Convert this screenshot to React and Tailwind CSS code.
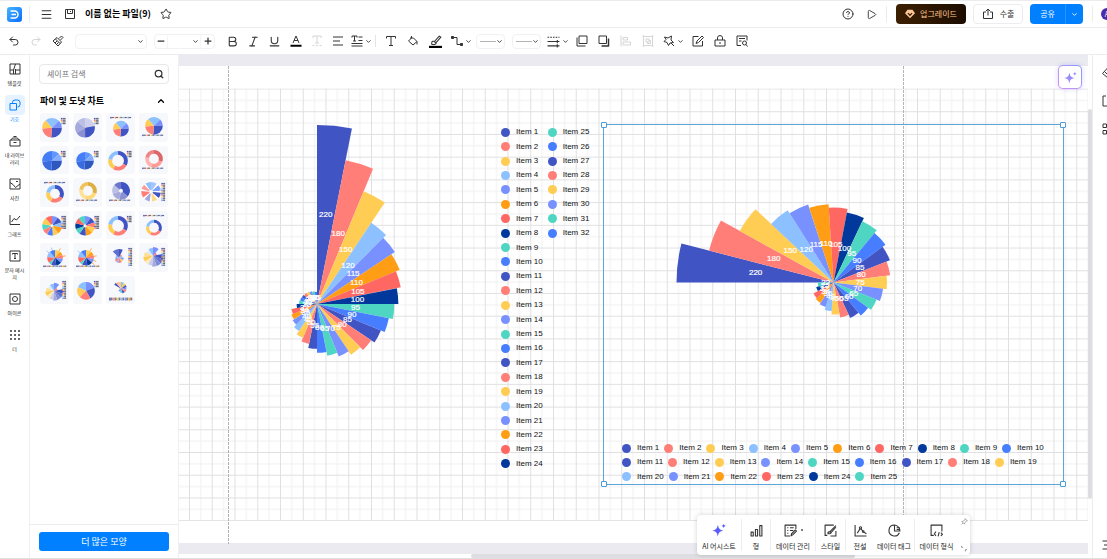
import React, { useState } from "react";
import {
  Bold, ChevronDown, ChevronUp, CircleHelp, Italic, Menu, Minus, Play, Plus,
  Redo2, Search, Star, Underline, Undo2,
} from "lucide-react";

const INDIGO = "#4054c4";
const CORAL = "#ff7f78";
const YELLOW = "#ffcd54";
const SKY = "#8cc0ff";
const PERI = "#7891ff";
const ORANGE = "#ff9d15";
const RED = "#ff6763";
const NAVY = "#00399b";
const TEAL = "#4fd6c2";
const BLUE = "#477eff";

const COLORS = [
  INDIGO, CORAL, YELLOW, SKY, PERI, ORANGE, RED, NAVY,
  TEAL, BLUE, INDIGO, CORAL, YELLOW, PERI, TEAL, BLUE,
  INDIGO, CORAL, YELLOW, SKY, PERI, ORANGE, RED, NAVY,
  TEAL, BLUE, INDIGO, CORAL, YELLOW, PERI, TEAL, BLUE,
];

const VALUES = [
  220, 180, 150, 120, 115, 110, 105, 100, 95, 90, 85, 80, 75, 70, 65, 60,
  55, 50, 45, 40, 36, 34, 32, 25, 22, 21, 20, 19, 18, 17, 16, 15,
];

function polar(cx, cy, r, deg) {
  const a = ((deg - 90) * Math.PI) / 180;
  return [cx + r * Math.cos(a), cy + r * Math.sin(a)];
}

function wedge(cx, cy, r, from, to, inner = 0) {
  const [x1, y1] = polar(cx, cy, r, from);
  const [x2, y2] = polar(cx, cy, r, to);
  const large = to - from > 180 ? 1 : 0;
  if (!inner) return `M${cx} ${cy}L${x1} ${y1}A${r} ${r} 0 ${large} 1 ${x2} ${y2}Z`;
  const [x3, y3] = polar(cx, cy, inner, to);
  const [x4, y4] = polar(cx, cy, inner, from);
  return `M${x1} ${y1}A${r} ${r} 0 ${large} 1 ${x2} ${y2}L${x3} ${y3}A${inner} ${inner} 0 ${large} 0 ${x4} ${y4}Z`;
}

function RoseChart({ cx, cy, radius, values, start = 0 }) {
  const step = 360 / values.length;
  return (
    <g>
      {values.map((v, i) => (
        <path
          key={i}
          d={wedge(cx, cy, (radius * v) / 220, start + i * step, start + (i + 1) * step)}
          fill={COLORS[i]}
        />
      ))}
      {values.map((v, i) => {
        const [x, y] = polar(cx, cy, (radius * v) / 440, start + (i + 0.5) * step);
        return (
          <text
            key={i}
            x={x}
            y={y + 2}
            textAnchor="middle"
            fill="#fff"
            stroke="#fff"
            strokeWidth="0.2"
            className="text-[8px] font-[Liberation_Sans,sans-serif]"
          >
            {v}
          </text>
        );
      })}
    </g>
  );
}

function LegendItem({ index }) {
  return (
    <div className="flex items-center gap-[6px] whitespace-nowrap">
      <span className="size-[9px] rounded-full" style={{ background: COLORS[index] }} />
      <span>Item {index + 1}</span>
    </div>
  );
}

function LegendRow({ from, to }) {
  return (
    <div className="flex gap-[5px]">
      {COLORS.slice(from, to).map((_, i) => (
        <LegendItem key={i} index={from + i} />
      ))}
    </div>
  );
}

/* ---------- icons ---------- */

function Svg({ size = 12, sw = 2, children, className = "" }) {
  return (
    <svg
      width={size}
      height={size}
      viewBox="0 0 24 24"
      fill="none"
      stroke="currentColor"
      strokeWidth={sw}
      strokeLinejoin="round"
      className={`shrink-0 ${className}`}
    >
      {children}
    </svg>
  );
}

const SaveIcon = () => <Svg><path d="M3 3h18v18H3zM7 3v8h10V3M13 6v2" /></Svg>;
const ExportIcon = () => <Svg><path d="M8 8H3v13h18V8h-5M12 15V2M8 6l4-4 4 4" /></Svg>;
const PainterIcon = () => (
  <Svg><path d="M14 7l5-5 3 3-5 5M10 5l9 9M10 5l-8 7 10 10 7-8M6 16l4-4M9 19l4-4M7 8l9 9" /></Svg>
);
const FontColorIcon = () => (
  <Svg><path d="M6 16L12 2l6 14M8 11h8" /><path d="M1 21.5h22" stroke="#000" strokeWidth="4" /></Svg>
);
const ClearTextIcon = () => <Svg><path d="M4 6V2h16v4M12 2v14M8 16h8M3 21h4M10 21h4M17 21h4" /></Svg>;
const AlignIcon = () => <Svg><path d="M2 4h20M2 12h14M2 20h20" /></Svg>;
const SpacingIcon = () => (
  <Svg><path d="M2 5V2h10v3M7 2v10M4 12h6M15 4h8M15 11h8M1 17h22M1 22h22" /></Svg>
);
const TextIcon = () => <Svg><path d="M3 7V3h18v4M12 3v18M8 21h8" /></Svg>;
const BucketIcon = () => <Svg><path d="M6 6h7l7 7-8 7-9-8 6-6M9 6V2M20 13v6" /></Svg>;
const LineColorIcon = () => (
  <Svg size={13}><path d="M5 15c0-4 3-4 5-3l9-10 3 2-9 10c1 3-3 4-8 3zM10 12l3 3" /><path d="M0 22h24" stroke="#000" strokeWidth="4" /></Svg>
);
const ConnectorIcon = () => (
  <Svg><path d="M3 5h9v14h9" /><path d="M1 3h4v4H1zM19 17h4v4h-4z" fill="currentColor" /></Svg>
);
const LineStyleIcon = () => (
  <Svg size={13}><path d="M1 4h22" strokeDasharray="3 2" /><path d="M1 12h22M1 20h22M19 9v6M19 17v6" /></Svg>
);
const FrontIcon = () => <Svg><path d="M6 2h16v15H6zM2 5v17h17" /></Svg>;
const BackIcon = () => <Svg><path d="M2 2h15v15H2z" /><path d="M21 7v15H7" strokeWidth="3" /></Svg>;
const AlignLeftIcon = () => <Svg><path d="M2 1v22M6 5h9v5H6zM6 14h15v6H6z" /></Svg>;
const GroupIcon = () => (
  <Svg><path d="M1 2h4M19 2h4M1 22h4M19 22h4M3 1v22M21 1v22M5 3h14M5 21h14M8 8h6v6H8zM14 11h3v6h-6v-3" /></Svg>
);
const MagicIcon = () => (
  <Svg><path d="M3 4l7 2 7-4-1 8 5 5-7 1-3 5-3-6-6-2 4-4zM16 16l6 6" /></Svg>
);
const EditIcon = () => <Svg><path d="M13 3H2v19h19V12M8 17l2-5L20 2l3 3-10 10z" /></Svg>;
const LockIcon = () => <Svg><path d="M2 10h20v12H2zM7 10V6a5 5 0 0110 0v4M12 14v4" /></Svg>;
const FindDocIcon = () => (
  <Svg><path d="M10 21H2V2h20v9M6 7h12M6 12h5" /><circle cx="17" cy="16" r="4" /><path d="M20 19l3 4" /></Svg>
);

const TemplateIcon = () => <Svg><path d="M2 2h20v20H2zM9 22V14l4-12M2 14h7M13 14h9M13 22V12" /></Svg>;
const ShapesIcon = () => <Svg><path d="M7 8V7a5 5 0 015-5h5a5 5 0 015 5v4a5 5 0 01-5 5M2 9h13v13H2z" /></Svg>;
const LibraryIcon = () => <Svg><path d="M2 10h20v12H2zM4 10l3-4h10l3 4M9 3h6M9 15h6" /></Svg>;
const PhotoIcon = () => <Svg><path d="M2 2h20v20H2zM2 9l6 4 5 6M13 19l9-7M14 7h4" /></Svg>;
const GraphIcon = () => <Svg><path d="M2 2v19h20M5 16l5-7 5 3 7-8" /></Svg>;
const TextBoxIcon = () => <Svg><path d="M2 2h20v20H2zM7 9V7h10v2M12 7v10M10 17h4" /></Svg>;
const IconBoxIcon = () => <Svg><path d="M2 2h20v20H2z" /><circle cx="12" cy="12" r="5" /></Svg>;
const DotsIcon = () => (
  <Svg>
    <g fill="currentColor" stroke="none">
      {[4, 12, 20].map((x) => [4, 12, 20].map((y) => <circle key={`${x}${y}`} cx={x} cy={y} r="2" />))}
    </g>
  </Svg>
);

function Sparkle({ size = 14, from = "#7a4dff", to = "#3b6cff", id }) {
  return (
    <svg width={size} height={size} viewBox="0 0 24 24">
      <defs>
        <linearGradient id={id} x1="0" y1="1" x2="1" y2="0">
          <stop offset="0" stopColor={from} />
          <stop offset="1" stopColor={to} />
        </linearGradient>
      </defs>
      <g fill={`url(#${id})`}>
        <path d="M10 3c1.500 7 3 8.500 10 10-7 1.500-8.500 3-10 10-1.500-7-3-8.500-10-10 7-1.500 8.500-3 10-10z" />
        <path d="M20 1c.4 2.600 1 3.400 4 4-3 .6-3.600 1.400-4 4-.4-2.600-1-3.400-4-4 3-.6 3.600-1.400 4-4z" />
      </g>
    </svg>
  );
}

const BarsIcon = () => <Svg size={13}><path d="M2 15h4v7H2zM10 10h4v12h-4zM18 3h4v19h-4z" /></Svg>;
const DataIcon = () => <Svg size={13}><path d="M22 9V2H2v20h9M6 7h2M11 7h7M6 12h2M11 12h6M6 17h2M13 22l1-4 7-7 2 2-7 7z" /></Svg>;
const StyleIcon = () => <Svg size={13}><path d="M6 21H2V2h16M12 22h10v-9M7 18c0-4 2-4 4-4L22 3M11 14l2 2 9-10M7 18c3 0 6 0 6-2" /></Svg>;
const LegendIcon = () => (
  <Svg size={13}><path d="M2 2v20h21M6 17l5-8M13 9l3 4M18 15l5 3" /><circle cx="12" cy="7" r="2" /><circle cx="17" cy="14" r="1.500" /></Svg>
);
const TagPieIcon = () => <Svg size={13}><path d="M21 16A10 10 0 1112 2M12 2v11h10A11 11 0 0012 2M16 7h6M16 10h6" /></Svg>;
const FormatIcon = () => <Svg size={13}><path d="M7 21H2V2h20v12M11 14l-3 4 3 4M20 16l3 3-3 3M17 15l-2 8" /></Svg>;

function LogoIcon() {
  return (
    <svg width="15" height="15" viewBox="0 0 30 30">
      <defs>
        <linearGradient id="logo" x1="0" y1="0" x2="1" y2="1">
          <stop offset="0" stopColor="#45b5ff" />
          <stop offset="1" stopColor="#0a6cff" />
        </linearGradient>
      </defs>
      <rect width="30" height="30" rx="6" fill="url(#logo)" />
      <path d="M7 8h8a7 7 0 010 14H7M9 15h9" fill="none" stroke="#fff" strokeWidth="3" />
    </svg>
  );
}

function GemIcon() {
  return (
    <svg width="10" height="10" viewBox="0 0 24 24">
      <path d="M6 2h12l6 8-12 12L0 10z" fill="#ffc796" />
      <path d="M7 10l5 5 5-5" fill="none" stroke="#3a1c00" strokeWidth="3" />
    </svg>
  );
}

/* ---------- header and toolbar ---------- */

function Header() {
  return (
    <header className="flex h-[28px] shrink-0 items-center overflow-hidden border-y border-[#ececee] pl-[7px]">
      <LogoIcon />
      <span className="ml-[7px] h-4 w-px bg-[#ececee]" />
      <button aria-label="메뉴" className="ml-[10px]"><Menu size={13} strokeWidth={2} /></button>
      <button aria-label="저장" className="ml-[11px]"><SaveIcon /></button>
      <h1 className="ml-[9px] text-[9px] leading-[14px] font-bold text-black">이름 없는 파일(9)</h1>
      <button aria-label="즐겨찾기" className="ml-[9px]"><Star size={12} strokeWidth={2} /></button>
      <div className="ml-auto flex shrink-0 items-center">
        <button aria-label="도움말"><CircleHelp size={12} strokeWidth={2} /></button>
        <button aria-label="재생" className="ml-3"><Play size={11} strokeWidth={2} /></button>
        <span className="ml-[9px] h-4 w-px bg-[#ececee]" />
        <button className="ml-[9px] flex h-5 w-[70px] items-center justify-center gap-[5px] rounded bg-gradient-to-r from-[#3d1f00] to-[#1c0c00] text-[8px] text-[#ffc796]">
          <GemIcon />업그레이드
        </button>
        <button className="ml-[7px] flex h-5 w-[50px] items-center justify-center gap-[6px] rounded border border-[#ececee] text-[8px]">
          <ExportIcon />수출
        </button>
        <div className="ml-[7px] flex h-5 w-[53px] overflow-hidden rounded bg-[#0080ff] text-white">
          <button className="flex-1 text-[8px]">공유</button>
          <button aria-label="공유 옵션" className="flex w-[18px] items-center justify-center border-l border-[#2a93ff]">
            <ChevronDown size={7} strokeWidth={3} />
          </button>
        </div>
        <span className="ml-[9px] h-4 w-px bg-[#ececee]" />
        <span className="-mr-[6px] ml-2 flex size-[12px] items-center justify-center rounded-full bg-[#4c2ab0] text-[7px] text-white">A</span>
      </div>
    </header>
  );
}

function Tool({ label, w = "w-[22px]", menu, off, children }) {
  return (
    <button aria-label={label} disabled={off} className={`flex h-5 shrink-0 items-center justify-center ${w} ${off ? "text-[#d4d4d6]" : ""}`}>
      {children}
      {menu && <ChevronDown size={7} strokeWidth={3} className="ml-[2px] shrink-0" />}
    </button>
  );
}

function ToolSelect({ label, className, children }) {
  return (
    <div className={`relative flex h-[15px] shrink-0 items-center ${className}`}>
      {children}
      <select aria-label={label} className="absolute inset-0 w-full appearance-none bg-transparent" />
      <ChevronDown size={7} strokeWidth={3} className="pointer-events-none ml-auto" />
    </div>
  );
}

function Toolbar() {
  return (
    <div className="flex h-[27px] shrink-0 items-center border-b border-[#ececee] pl-[3px]">
      <Tool label="실행 취소"><Undo2 size={12} /></Tool>
      <Tool label="다시 실행" off><Redo2 size={12} /></Tool>
      <Tool label="서식 복사"><PainterIcon /></Tool>
      <ToolSelect label="글꼴" className="ml-[6px] w-[72px] rounded-sm border border-[#f1f1f3] pr-[2px]" />
      <div className="ml-[7px] flex h-[15px] w-[61px] shrink-0 items-center rounded-sm border border-[#f1f1f3]">
        <button aria-label="작게" className="flex w-3 justify-center"><Minus size={10} strokeWidth={3} /></button>
        <ToolSelect label="글꼴 크기" className="w-[34px] border-x border-[#f5f5f7] pr-[1px]" />
        <button aria-label="크게" className="flex flex-1 justify-center"><Plus size={10} strokeWidth={3} /></button>
      </div>
      <div className="ml-[7px] flex">
        <Tool label="굵게" w="w-[21px]"><Bold size={13} /></Tool>
        <Tool label="기울임꼴" w="w-[21px]"><Italic size={13} /></Tool>
        <Tool label="밑줄" w="w-[21px]"><Underline size={13} /></Tool>
        <Tool label="글꼴 색" w="w-[21px]"><FontColorIcon /></Tool>
        <Tool label="텍스트 효과" w="w-[21px]" off><ClearTextIcon /></Tool>
        <Tool label="정렬" w="w-[21px]"><AlignIcon /></Tool>
        <Tool label="줄 간격" w="w-[27px]" menu><SpacingIcon /></Tool>
      </div>
      <span className="h-3 w-px bg-[#e4e4e6]" />
      <div className="ml-1 flex">
        <Tool label="텍스트"><TextIcon /></Tool>
        <Tool label="채우기"><BucketIcon /></Tool>
        <Tool label="선 색"><LineColorIcon /></Tool>
        <Tool label="연결선" w="w-[30px]" menu><ConnectorIcon /></Tool>
      </div>
      <ToolSelect label="선 두께" className="w-[29px] rounded-sm border border-[#f1f1f3] pr-px pl-[3px]">
        <span className="h-px w-4 bg-[#b4b4b6]" />
      </ToolSelect>
      <ToolSelect label="선 종류" className="ml-[7px] w-[29px] rounded-sm border border-[#f1f1f3] pr-px pl-[3px]">
        <span className="h-px w-4 bg-[#b4b4b6]" />
      </ToolSelect>
      <div className="ml-1 flex">
        <Tool label="화살표" w="w-[26px]" menu><LineStyleIcon /></Tool>
        <Tool label="맨 앞으로"><FrontIcon /></Tool>
        <Tool label="맨 뒤로"><BackIcon /></Tool>
        <Tool label="맞춤" off><AlignLeftIcon /></Tool>
        <Tool label="그룹" off><GroupIcon /></Tool>
        <Tool label="효과" w="w-[28px]" menu><MagicIcon /></Tool>
        <Tool label="편집"><EditIcon /></Tool>
        <Tool label="잠금"><LockIcon /></Tool>
        <Tool label="찾기"><FindDocIcon /></Tool>
      </div>
    </div>
  );
}

/* ---------- left side ---------- */

const NAV = [
  { label: "템플릿", icon: TemplateIcon },
  { label: "기호", icon: ShapesIcon },
  { label: "내 라이브러리", icon: LibraryIcon },
  { label: "사진", icon: PhotoIcon },
  { label: "그래프", icon: GraphIcon },
  { label: "문자 메시지", icon: TextBoxIcon },
  { label: "아이콘", icon: IconBoxIcon },
  { label: "더", icon: DotsIcon },
];

function SideNav() {
  const [active, setActive] = useState("기호");
  return (
    <nav className="flex w-[30px] shrink-0 flex-col items-center gap-[9px] border-r border-[#f0f0f2] pt-1">
      {NAV.map(({ label, icon: Icon }) => (
        <button
          key={label}
          onClick={() => setActive(label)}
          className={`flex w-[23px] flex-col items-center ${active === label ? "text-[#0080ff]" : ""}`}
        >
          <span className={`flex size-5 items-center justify-center rounded ${active === label ? "bg-[#e6f2ff]" : ""}`}>
            <Icon />
          </span>
          <span className={`text-center text-[5px] leading-[7px] ${active === label ? "" : "text-[#222]"}`}>{label}</span>
        </button>
      ))}
    </nav>
  );
}

const MIX = [[SKY, 45], [PERI, 45], [INDIGO, 95], [CORAL, 80], [YELLOW, 55], [SKY, 40]];
const LILAC = [["#cfd1ec", 80], ["#4054c4", 100], ["#8a90d2", 60], ["#a5a9dc", 70], ["#bcbfe4", 50]];
const LILAC_DARK = [["#4054c4", 130], ["#8a90d2", 60], ["#a5a9dc", 60], ["#bcbfe4", 60], ["#6b75cc", 50]];
const BLUES = [["#5e95ff", 45], ["#86acff", 45], ["#2f57c0", 95], ["#3a6ce0", 80], ["#447df5", 95]];
const RING = [[INDIGO, 120], [CORAL, 90], [YELLOW, 70], [SKY, 80]];
const REDS = [["#dc6868", 110], ["#ff9b96", 90], ["#ffb4b0", 80], ["#ef8582", 80]];
const GOLDS = [["#dcae44", 110], ["#ffd978", 90], ["#ffe29a", 80], ["#efc35c", 80]];
const MANY = [
  [PERI, 35], [INDIGO, 35], [SKY, 30], [ORANGE, 40], [YELLOW, 35], [BLUE, 35],
  [CORAL, 35], [TEAL, 35], [YELLOW, 40], [RED, 40],
];
const DARK = [
  [PERI, 35], [INDIGO, 35], [CORAL, 30], [YELLOW, 35], [ORANGE, 40], [INDIGO, 40],
  [TEAL, 35], [NAVY, 35], [RED, 35], [TEAL, 40],
];
const FAN = [["#a8c4ff", 36], ["#fff", 12], ["#7ba3ff", 36], ["#fff", 12], ["#4054c4", 34], ["#fff", 12], ["#ffd98a", 34], ["#fff", 12], ["#a5a9dc", 34], ["#fff", 12], [CORAL, 40], ["#fff", 12], ["#ff9b96", 30], ["#fff", 10], [SKY, 34]];
const ROSE = [
  [YELLOW, 40], [ORANGE, 30], [CORAL, 30], [PERI, 30], [NAVY, 40], [INDIGO, 40],
  [TEAL, 20], [RED, 45], [SKY, 45], [BLUE, 40],
];
const SHELL = [
  [INDIGO, 30, 1], ["#5f70cf", 25, 1.100], ["#7d8ad8", 25, 1.100], ["#a5a9dc", 25, 1.100], ["#c9cdee", 25, 1], ["#ffe9b8", 25, 1],
  [YELLOW, 30, 1], ["#ffdf95", 30, 0.9], ["#d9e8ff", 30, 0.7], [SKY, 35, 0.8], [PERI, 40, 0.9], [CORAL, 40, 0.4],
];
const WING = [
  [INDIGO, 25, 1.500], [CORAL, 30, 0.6], [SKY, 35, 0.6], [PERI, 30, 0.8], [YELLOW, 30, 0.8], [CORAL, 30, 0.9],
  [SKY, 30, 0.9], [CORAL, 35, 0.8], [PERI, 35, 0.6], [SKY, 35, 0.6], ["#5f70cf", 45, 1.500],
];
const HALF = [
  [SKY, 25, 1.400], [YELLOW, 25, 1.300], [INDIGO, 25, 1.200], [PERI, 25, 1.100], [CORAL, 30, 1.100], [INDIGO, 30, 1],
  [TEAL, 30, 0.8], [PERI, 50, 0.6], [ORANGE, 60, 0.3], [INDIGO, 20, 1.600], ["#ffb4b0", 20, 1.500], [YELLOW, 20, 1.400],
];

const THUMBS = [
  { s: MIX, cx: 12, cy: 15, r: 10, legend: "right" },
  { s: LILAC, cx: 12, cy: 15, r: 10, legend: "right" },
  { s: MIX, cx: 15, cy: 16, r: 8, legend: "top" },
  { s: MIX, cx: 15, cy: 13, r: 9, legend: "bottom" },
  { s: BLUES, cx: 12, cy: 15, r: 10, legend: "right" },
  { s: BLUES, cx: 12, cy: 15, r: 9, legend: "right" },
  { s: RING, cx: 12, cy: 15, r: 10, inner: 6, legend: "right" },
  { s: REDS, cx: 15, cy: 13, r: 9, inner: 5, legend: "bottom" },
  { s: RING, cx: 15, cy: 16, r: 9, inner: 5, legend: "top" },
  { s: GOLDS, cx: 15, cy: 13, r: 9, inner: 5, legend: "bottom" },
  { s: LILAC_DARK, cx: 15, cy: 13, r: 9, inner: 2, legend: "bottom" },
  { s: FAN, cx: 12, cy: 14, r: 10, inner: 2, legend: "tall" },
  { s: MANY, cx: 12, cy: 15, r: 10, inner: 1.500, legend: "side" },
  { s: DARK, cx: 12, cy: 15, r: 10, inner: 1.500, legend: "side" },
  { s: RING, cx: 12, cy: 15, r: 10, inner: 6, legend: "right" },
  { s: RING, cx: 15, cy: 17, r: 8, inner: 5, legend: "top" },
  { s: ROSE, cx: 15, cy: 15, r: 8, rays: [30, 80, 310, 340], legend: "base" },
  { s: ROSE, cx: 13, cy: 15, r: 8, rays: [30, 80, 110, 130, 310], legend: "base" },
  { s: WING, cx: 13, cy: 15, r: 6, legend: "tall" },
  { s: SHELL, cx: 14, cy: 13, r: 10, turn: 80, legend: "tall" },
  { s: SHELL, cx: 14, cy: 15, r: 9, turn: 80, legend: "tall" },
  { s: [[PERI, 70], [INDIGO, 80], [CORAL, 75], [YELLOW, 70], [SKY, 65]], cx: 13, cy: 15, r: 9, legend: "right" },
  { s: HALF, cx: 15, cy: 13, r: 5, legend: "words" },
];

const BITS = [INDIGO, CORAL, YELLOW, SKY, PERI, ORANGE];

function ThumbLegend({ kind }) {
  const row = (y, x0, n, step) =>
    BITS.slice(0, n).map((c, i) => (
      <g key={i}>
        <rect x={x0 + i * step} y={y} width="1.500" height="1.500" fill={c} />
        <rect x={x0 + 1.500 + i * step} y={y} width={step / 2} height="1.200" fill="#6a6a78" />
      </g>
    ));
  const column = (x, y0, n, w) =>
    Array.from({ length: n }, (_, i) => (
      <g key={i}>
        <rect x={x} y={y0 + i * 1.700} width="1.500" height="1.500" fill={BITS[i % 6]} />
        <rect x={x + 1.800} y={y0 + i * 1.700} width={w} height="1.300" fill="#6a6a78" />
      </g>
    ));
  if (kind === "right") return column(21, 5, 4, 3);
  if (kind === "side") return column(21.500, 5, 8, 3);
  if (kind === "tall") return column(22.500, 5, 11, 2);
  if (kind === "top") return row(4, 4, 5, 4.400);
  if (kind === "bottom") return row(22, 3, 5, 4.400);
  if (kind === "base") return row(23, 3, 6, 4);
  return <>{row(22, 3, 6, 4)}{row(23.500, 3, 6, 4)}</>;
}

function Thumb({ s, cx, cy, r, inner, turn = 0, rays = [], legend }) {
  let at = turn;
  return (
    <svg viewBox="0 0 29 29" className="size-full">
      {rays.map((deg) => {
        const [x, y] = polar(cx, cy, r + 3, deg);
        return <path key={deg} d={`M${cx} ${cy}L${x} ${y}`} stroke={deg > 200 ? SKY : ORANGE} strokeWidth="0.800" />;
      })}
      {s.map(([color, sweep, k = 1], i) => {
        const d = wedge(cx, cy, r * k, at, at + sweep, inner);
        at += sweep;
        return <path key={i} d={d} fill={color} />;
      })}
      <ThumbLegend kind={legend} />
    </svg>
  );
}

function ShapePanel() {
  return (
    <aside className="flex w-[149px] shrink-0 flex-col border-r border-[#f0f0f2]">
      <div className="flex-1 px-[9px]">
        <label className="mt-[9px] flex h-5 items-center rounded border border-[#e8e8ea] pr-1 pl-[7px]">
          <input type="text" aria-label="셰이프 검색" placeholder="셰이프 검색" className="w-full min-w-0 text-[8px] outline-none placeholder:text-[#77777c]" />
          <Search size={10} strokeWidth={3} className="shrink-0" />
        </label>
        <button className="mt-[9px] flex h-4 w-full items-center justify-between px-px text-[9px] font-bold text-black">
          파이 및 도넛 차트
          <ChevronUp size={10} strokeWidth={3} className="mr-[2px]" />
        </button>
        <div className="mt-1 grid h-[191px] grid-cols-4 grid-rows-6 gap-1 px-px">
          {THUMBS.map((t, i) => (
            <button key={i} aria-label={`차트 ${i + 1}`} className="min-h-0 rounded-[3px] bg-[#f7f8fc]">
              <Thumb {...t} />
            </button>
          ))}
        </div>
      </div>
      <div className="border-t border-[#ececee] px-[9px] py-[7px]">
        <button className="block h-[19px] w-full rounded-[3px] bg-[#0080ff] text-[9px] leading-[19px] text-white">더 많은 모양</button>
      </div>
    </aside>
  );
}

/* ---------- canvas ---------- */

function Drawing() {
  return (
    <svg className="absolute inset-0 size-full">
      <defs>
        <pattern id="grid" x="10" y="33.500" width="22.750" height="22.720" patternUnits="userSpaceOnUse">
          <path d="M11.800 0v23M0 11.800h23" stroke="#f0f0f1" fill="none" />
          <path d="M0.500 0v23M0 0.500h23" stroke="#e0e0e2" fill="none" />
        </pattern>
      </defs>
      <rect y="33.500" width="100%" height="432.500" fill="url(#grid)" />
      <path d="M49.500 11v478M724.500 11v478" stroke="#b4b4b8" strokeDasharray="3 1" />
      <RoseChart cx={138} cy={249} radius={179} values={VALUES} />
      <RoseChart cx={654.500} cy={227.500} radius={157} values={VALUES.slice(0, 25)} start={270} />
    </svg>
  );
}

function Selection() {
  const handle = "absolute size-[6px] rounded-[1px] border border-[#4a9bd6] bg-white";
  return (
    <div className="absolute top-[69px] left-[424px] h-[361px] w-[461px] border border-[#5ba5d9]">
      <span className={`${handle} -top-[3px] -left-[3px]`} />
      <span className={`${handle} -top-[3px] -right-[3px]`} />
      <span className={`${handle} -bottom-[3px] -left-[3px]`} />
      <span className={`${handle} -right-[3px] -bottom-[3px]`} />
      <div className="absolute bottom-0 left-[18px] flex h-[43px] flex-col justify-around">
        <LegendRow from={0} to={10} />
        <LegendRow from={10} to={19} />
        <LegendRow from={19} to={25} />
      </div>
    </div>
  );
}

function ChartAction({ label, icon, w, divider = true, dot }) {
  return (
    <button className={`my-1 flex flex-col items-center justify-end gap-1 ${w} ${divider ? "border-r border-[#ececee]" : ""}`}>
      <span className="flex h-[14px] items-center gap-1">
        {icon}
        {dot && <span className="h-[2px] w-[2px] rounded-full bg-[#555]" />}
      </span>
      <span className="text-[7px] leading-[10px] whitespace-nowrap text-[#222]">{label}</span>
    </button>
  );
}

function ChartBar() {
  return (
    <div className="absolute bottom-[3px] left-[518px] flex h-[40px] rounded bg-white shadow-[0_0_5px_rgba(0,0,0,0.180)]">
      <ChartAction label="AI 어시스트" w="w-[45px]" icon={<Sparkle id="ai" />} />
      <ChartAction label="형" w="w-[29px]" icon={<BarsIcon />} />
      <ChartAction label="데이터 관리" w="w-[45px]" icon={<DataIcon />} dot />
      <ChartAction label="스타일" w="w-[30px]" icon={<StyleIcon />} />
      <ChartAction label="전설" w="w-[28px]" icon={<LegendIcon />} divider={false} />
      <ChartAction label="데이터 태그" w="w-[41px]" icon={<TagPieIcon />} />
      <ChartAction label="데이터 형식" w="w-[43px]" icon={<FormatIcon />} divider={false} />
      <div className="flex w-3 flex-col items-center justify-between py-[3px] text-[#8a8a8e]">
        <button aria-label="고정"><Svg size={7} sw={2.500}><path d="M14 2l8 8-4 1-5 5-1 5-9-9 5-1 5-5zM7 17l-5 5" /></Svg></button>
        <button aria-label="크기 조절"><Svg size={7} sw={3}><path d="M2 3v5h5M15 22v-6h6" /></Svg></button>
      </div>
    </div>
  );
}

function Canvas() {
  return (
    <main className="flex min-w-0 flex-1 flex-col">
      <div className="flex min-h-0 flex-1">
        <div className="relative flex flex-1 flex-col overflow-hidden text-[8px] leading-[10px] text-[#111] font-[Liberation_Sans,sans-serif]">
          <div className="h-[11px] bg-[#eaeaf0]" />
          <div className="flex-1 bg-white" />
          <div className="h-[11px] bg-[#eaeaf0]" />
          <Drawing />
          <div className="absolute top-[70px] left-[322px] grid h-[346px] grid-flow-col grid-rows-[repeat(24,1fr)] items-center gap-x-[5px]">
            {COLORS.map((_, i) => (
              <LegendItem key={i} index={i} />
            ))}
          </div>
          <Selection />
        </div>
        <div className="flex w-1 flex-col pt-[54px] pb-[55px]">
          <div className="flex-1 rounded bg-[#dedee2]" />
        </div>
      </div>
      <div className="flex h-[4px] shrink-0">
        <div className="ml-[32%] w-[42%] rounded bg-[#dedee2]" />
      </div>
    </main>
  );
}

function RightRail() {
  return (
    <aside className="flex w-[15px] shrink-0 flex-col gap-4 overflow-hidden border-l border-[#ececee] pt-3 pb-[7px] pl-[9px]">
      <button aria-label="스타일"><Svg><path d="M12 1l10 10-10 11L1 13zM5 9l12 12" /></Svg></button>
      <button aria-label="페이지"><Svg><path d="M8 2H2v20h20V2M11 8h8M11 14h8" /></Svg></button>
      <button aria-label="구성"><Svg><path d="M2 2h7v7H2zM15 2h7v7h-7zM2 15h7v7H2zM15 15h7v7h-7z" /></Svg></button>
      <button aria-label="목록" className="mt-auto"><Svg><path d="M1 4h22M4 12h19M1 20h22" /></Svg></button>
    </aside>
  );
}

export default function App() {
  return (
    <div className="flex h-screen flex-col overflow-hidden border-b border-[#e0e0e2] bg-white font-['Noto_Sans_CJK_KR','Noto_Sans',sans-serif] text-[#333]">
      <Header />
      <Toolbar />
      <div className="flex min-h-0 flex-1">
        <SideNav />
        <ShapePanel />
        <div className="relative flex min-w-0 flex-1">
          <Canvas />
          <button aria-label="AI" className="absolute top-[10px] right-[25px] rounded-[5px] bg-gradient-to-tr from-[#dc8cf5] to-[#7c9cff] p-px shadow-[0_0_5px_rgba(120,120,255,0.300)]">
            <span className="flex size-[22px] items-center justify-center rounded bg-white">
              <Sparkle id="aiFloat" size={13} from="#c78cf5" to="#6c8cff" />
            </span>
          </button>
          <ChartBar />
          <RightRail />
        </div>
      </div>
    </div>
  );
}
